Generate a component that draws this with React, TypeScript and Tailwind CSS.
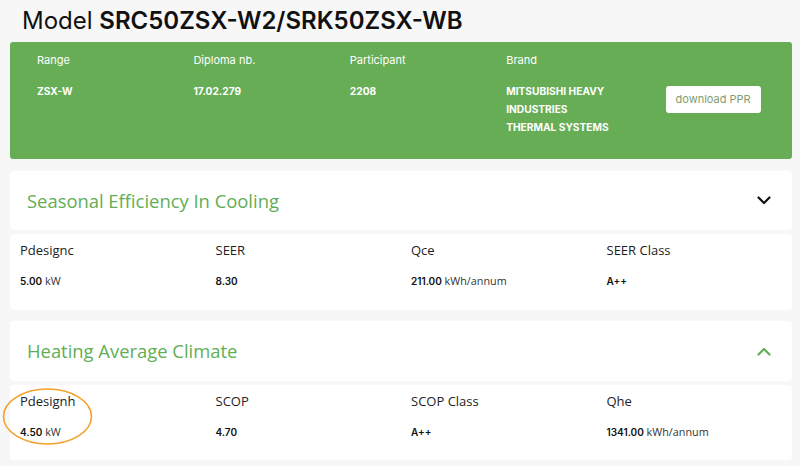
import React from "react";

const poppins = { fontFamily: "Inter, 'Noto Sans', sans-serif" };
const segoe = { fontFamily: "'Open Sans', 'Noto Sans', sans-serif" };

function Chevron({ up, color }: { up?: boolean; color: string }) {
  return (
    <svg width="14" height="9" viewBox="0 0 14 9" className="block">
      <path
        d={up ? "M1.5 7.5 L7 2 L12.5 7.5" : "M1.5 1.5 L7 7 L12.5 1.5"}
        fill="none"
        stroke={color}
        strokeWidth="2.2"
        strokeLinecap="round"
        strokeLinejoin="round"
      />
    </svg>
  );
}

type Item = { label: string; value: string; unit?: string };

function Section({
  title,
  up,
  items,
  annotate,
  headerH,
  bodyH,
}: {
  title: string;
  up?: boolean;
  items: Item[];
  annotate?: boolean;
  headerH: string;
  bodyH: string;
}) {
  return (
    <div className="flex flex-col gap-[4px]">
      <div className={`flex items-center justify-between bg-white rounded-[4px] pl-[17px] pr-[21px] ${headerH}`}>
        <div className="text-[18.4px] text-[#5fae55]" style={segoe}>
          {title}
        </div>
        <Chevron up={up} color={up ? "#5fae55" : "#111111"} />
      </div>
      <div className={`relative grid grid-cols-4 bg-white rounded-[4px] pt-[6px] ${bodyH}`}>
        {items.map((it) => (
          <div key={it.label} className="pl-[10px] flex flex-col">
            <div className="text-[13px] leading-[20px] text-[#222]" style={segoe}>
              {it.label}
            </div>
            <div className="mt-[10px] leading-[18px] text-[#111]">
              <span className="text-[10px] font-semibold" style={poppins}>
                {it.value}
              </span>
              {it.unit && (
                <span className="text-[10.8px] text-[#333]" style={segoe}>
                  {" "}
                  {it.unit}
                </span>
              )}
            </div>
          </div>
        ))}
        {annotate && (
          <svg
            className="absolute left-[-8px] top-[2px] pointer-events-none"
            width="92"
            height="58"
            viewBox="0 0 92 58"
          >
            <ellipse cx="45.5" cy="29.5" rx="44" ry="27.5" fill="none" stroke="#f5a12a" strokeWidth="1.6" />
          </svg>
        )}
      </div>
    </div>
  );
}

export default function App() {
  const bannerCols = [
    { label: "Range", value: ["ZSX-W"] },
    { label: "Diploma nb.", value: ["17.02.279"] },
    { label: "Participant", value: ["2208"] },
    { label: "Brand", value: ["MITSUBISHI HEAVY", "INDUSTRIES", "THERMAL SYSTEMS"] },
  ];
  return (
    <div className="w-[800px] h-[466px] overflow-hidden bg-[#f7f7f7] pl-[10px] pr-[8px]">
      <div className="pl-[12px] pt-[6px] h-[42px] text-[24px] leading-[30px] text-[#111]" style={poppins}>
        <span className="font-normal">Model </span>
        <span className="font-semibold">SRC50ZSX-W2/SRK50ZSX-WB</span>
      </div>
      <div className="grid grid-cols-5 bg-[#66ad56] rounded-[3px] pt-[9px] pb-[23px] text-white" style={poppins}>
        {bannerCols.map((c) => (
          <div key={c.label} className="pl-[27px] flex flex-col">
            <div className="text-[11px] leading-[18px]">{c.label}</div>
            <div className="mt-[13px] flex flex-col">
              {c.value.map((v) => (
                <div key={v} className="text-[10.2px] leading-[18px] font-bold">
                  {v}
                </div>
              ))}
            </div>
          </div>
        ))}
        <div className="pl-[30px] pt-[35px]">
          <div className="w-[95px] h-[27px] bg-white rounded-[3px] flex items-center justify-center text-[11px] text-[#7f9c72]">
            download PPR
          </div>
        </div>
      </div>
      <div className="mt-[12px] flex flex-col gap-[11px]">
        <Section
          title="Seasonal Efficiency In Cooling"
          headerH="h-[59px]"
          bodyH="h-[76px]"
          items={[
            { label: "Pdesignc", value: "5.00", unit: "kW" },
            { label: "SEER", value: "8.30" },
            { label: "Qce", value: "211.00", unit: "kWh/annum" },
            { label: "SEER Class", value: "A++" },
          ]}
        />
        <Section
          title="Heating Average Climate"
          up
          annotate
          headerH="h-[60px]"
          bodyH="h-[75px]"
          items={[
            { label: "Pdesignh", value: "4.50", unit: "kW" },
            { label: "SCOP", value: "4.70" },
            { label: "SCOP Class", value: "A++" },
            { label: "Qhe", value: "1341.00", unit: "kWh/annum" },
          ]}
        />
      </div>
    </div>
  );
}
